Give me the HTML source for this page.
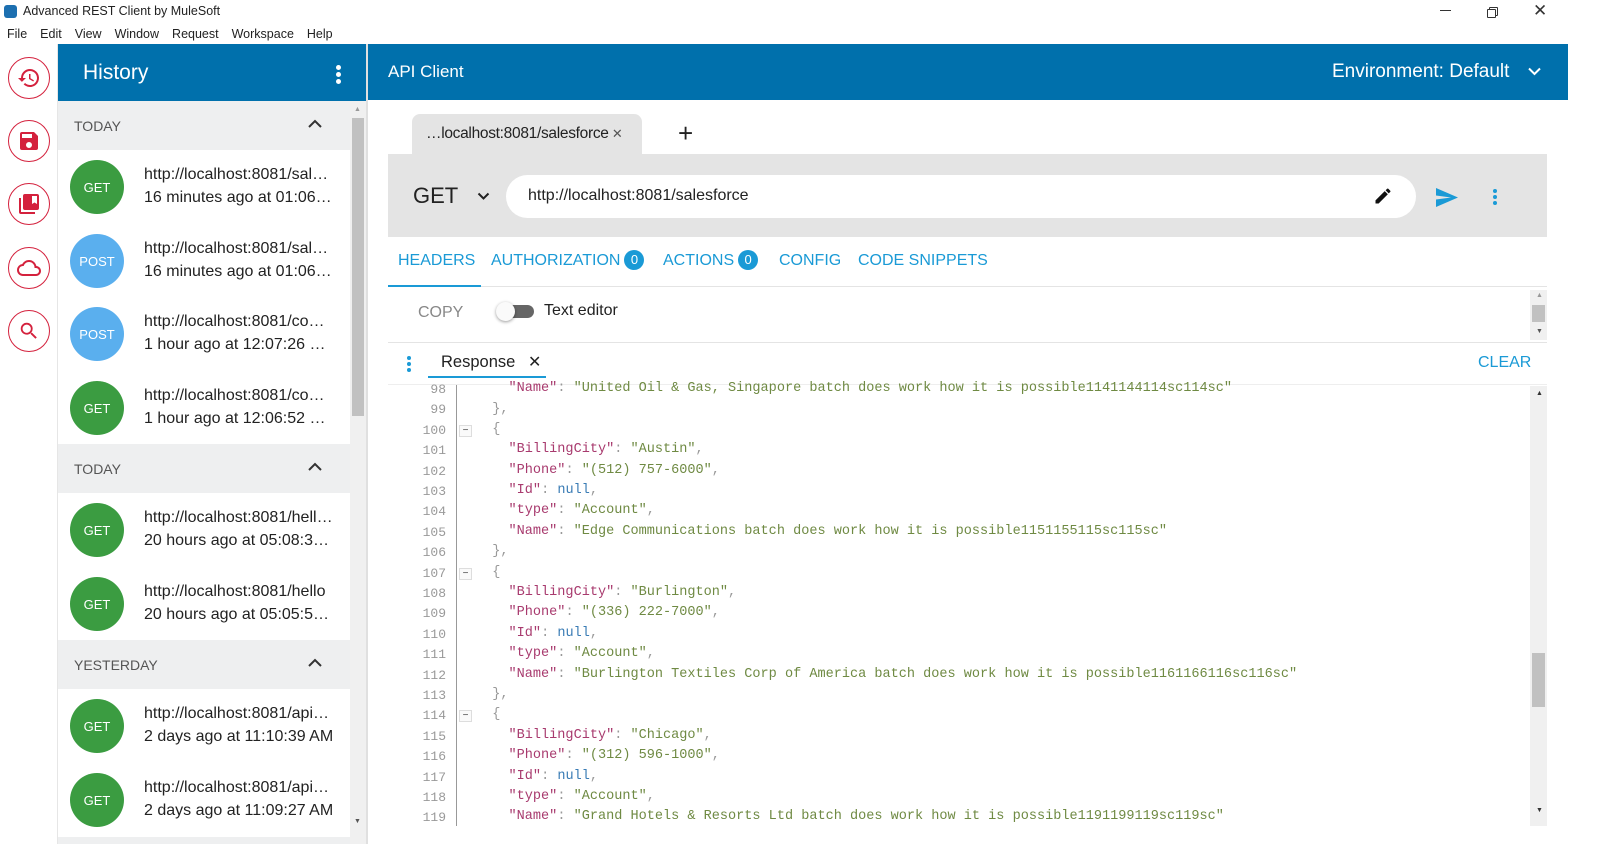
<!DOCTYPE html>
<html><head><meta charset="utf-8"><style>
*{box-sizing:border-box;margin:0;padding:0}
body{width:1600px;height:844px;position:relative;overflow:hidden;background:#fff;font-family:"Liberation Sans",Arial,sans-serif;color:#222}
.a{position:absolute}
.menu span{margin-right:13px}
.rail{left:8px;width:42px;height:42px;border:1.3px solid #d4213d;border-radius:50%;display:flex;align-items:center;justify-content:center}
.grp{left:58px;width:292px;height:49px;background:#eeeff0;color:#555;font-size:14px;padding:17px 0 0 16px}
.grp svg{position:absolute;right:28px;top:18px}
.item{left:58px;width:292px;height:74px;background:#fff}
.circ{position:absolute;left:12px;top:10px;width:54px;height:54px;border-radius:50%;color:#fff;font-size:13px;display:flex;align-items:center;justify-content:center}
.g{background:#3b9c41}.p{background:#5aafee}
.t1,.t2{position:absolute;left:86px;font-size:16px;color:#222;white-space:nowrap}
.t1{top:16px}.t2{top:39px}
.tab{font-size:16px;color:#1a9ad6;top:252px}
.badge{display:inline-block;width:20px;height:20px;border-radius:50%;background:#1a9ad6;color:#fff;font-size:13px;text-align:center;line-height:20px;margin-left:4px;vertical-align:1px}
.ln{left:400px;width:46px;text-align:right;font-family:"Liberation Mono",monospace;font-size:13px;color:#999}
.cd{left:476px;font-family:"Liberation Mono",monospace;font-size:13.55px;color:#999;white-space:pre}
.k{color:#a83a6e}.s{color:#6f8a43}.n{color:#3a7cb5}
.fold{left:459px;width:13px;height:12px;border:1px solid #ddd;background:#fafafa;font-size:10px;line-height:9px;text-align:center;color:#444}
</style></head><body>
<div class="a" style="left:4px;top:5px;width:13px;height:13px;background:#1c6fb0;border-radius:3px"></div>
<div class="a" style="left:23px;top:4px;font-size:12.5px;color:#222">Advanced REST Client by MuleSoft</div>
<div class="a" style="left:1440px;top:10px;width:11px;height:1px;background:#333"></div>
<div class="a" style="left:1489px;top:7px;width:9px;height:9px;border:1px solid #333;border-radius:1px"></div>
<div class="a" style="left:1487px;top:9px;width:9px;height:9px;border:1px solid #333;background:#fff;border-radius:1px"></div>
<div class="a" style="left:1533px;top:1px;font-size:17px;color:#333">✕</div>
<div class="a menu" style="left:7px;top:27px;font-size:12.5px;color:#222"><span>File</span><span>Edit</span><span>View</span><span>Window</span><span>Request</span><span>Workspace</span><span>Help</span></div>

<div class="a rail" style="top:57px"><svg width="24" height="24" viewBox="0 0 24 24"><path fill="#d4213d" d="M13 3a9 9 0 0 0-9 9H1l3.9 3.9L9 12H6a7 7 0 1 1 2.05 4.950l-1.42 1.42A9 9 0 1 0 13 3zm-1 5v5l4.28 2.54.72-1.21-3.5-2.08V8H12z"/></svg></div>
<div class="a rail" style="top:120px"><svg width="24" height="24" viewBox="0 0 24 24"><path fill="#d4213d" d="M17 3H5a2 2 0 0 0-2 2v14a2 2 0 0 0 2 2h14a2 2 0 0 0 2-2V7l-4-4zm-5 16a3 3 0 1 1 0-6 3 3 0 0 1 0 6zm3-10H5V5h10v4z"/></svg></div>
<div class="a rail" style="top:183px"><svg width="24" height="24" viewBox="0 0 24 24"><path fill="#d4213d" d="M4 6H2v14a2 2 0 0 0 2 2h14v-2H4V6zm16-4H8a2 2 0 0 0-2 2v12a2 2 0 0 0 2 2h12a2 2 0 0 0 2-2V4a2 2 0 0 0-2-2zm0 10-2.5-1.5L15 12V4h5v8z"/></svg></div>
<div class="a rail" style="top:247px"><svg width="24" height="24" viewBox="0 0 24 24"><path fill="#d4213d" d="M19.35 10.04A7.49 7.49 0 0 0 12 4C9.11 4 6.6 5.64 5.350 8.04A5.99 5.99 0 0 0 0 14c0 3.31 2.69 6 6 6h13c2.76 0 5-2.24 5-5 0-2.64-2.05-4.78-4.65-4.96zM19 18H6c-2.21 0-4-1.79-4-4s1.79-4 4-4h.71C7.37 7.69 9.48 6 12 6a5.5 5.5 0 0 1 5.5 5.5v.5H19a3 3 0 0 1 0 6z"/></svg></div>
<div class="a rail" style="top:310px"><svg width="22" height="22" viewBox="0 0 24 24"><path fill="#d4213d" d="M15.5 14h-.79l-.28-.27A6.47 6.47 0 0 0 16 9.5 6.5 6.5 0 1 0 9.5 16c1.61 0 3.09-.59 4.23-1.57l.27.28v.79l5 4.99L20.49 19l-4.99-5zm-6 0C7.01 14 5 11.99 5 9.5S7.01 5 9.5 5 14 7.01 14 9.5 11.99 14 9.5 14z"/></svg></div>
<div class="a" style="left:57px;top:44px;width:1px;height:800px;background:#e6e6e6"></div>

<div class="a" style="left:58px;top:44px;width:309px;height:800px;background:#eeeff0"></div>
<div class="a" style="left:58px;top:44px;width:309px;height:57px;background:#0070ac"></div>
<div class="a" style="left:83px;top:61px;font-size:21px;color:#fff">History</div>
<div class="a" style="left:336px;top:65px;width:5px;height:5px;border-radius:50%;background:#fff;box-shadow:0 7px 0 #fff,0 14px 0 #fff"></div>
<div class="a" style="left:350px;top:101px;width:16px;height:743px;background:#f0f0f0"></div>
<div class="a" style="left:352px;top:118px;width:12px;height:298px;background:#c1c1c1"></div>
<div class="a" style="left:354px;top:106px;font-size:7px;color:#999">▲</div>
<div class="a" style="left:354px;top:818px;font-size:7px;color:#555">▼</div>
<div class="a" style="left:366px;top:44px;width:2px;height:800px;background:#e0e0e0"></div>

<div class="a grp" style="top:101px">TODAY<svg width="14" height="10" viewBox="0 0 14 10"><path d="M1 8l6-6 6 6" stroke="#333" stroke-width="2" fill="none"/></svg></div>
<div class="a item" style="top:150px"><div class="circ g">GET</div><div class="t1">http://localhost:8081/sal…</div><div class="t2">16 minutes ago at 01:06…</div></div>
<div class="a item" style="top:224px"><div class="circ p">POST</div><div class="t1">http://localhost:8081/sal…</div><div class="t2">16 minutes ago at 01:06…</div></div>
<div class="a item" style="top:297px"><div class="circ p">POST</div><div class="t1">http://localhost:8081/co…</div><div class="t2">1 hour ago at 12:07:26 …</div></div>
<div class="a item" style="top:371px"><div class="circ g">GET</div><div class="t1">http://localhost:8081/co…</div><div class="t2">1 hour ago at 12:06:52 …</div></div>
<div class="a grp" style="top:444px">TODAY<svg width="14" height="10" viewBox="0 0 14 10"><path d="M1 8l6-6 6 6" stroke="#333" stroke-width="2" fill="none"/></svg></div>
<div class="a item" style="top:493px"><div class="circ g">GET</div><div class="t1">http://localhost:8081/hell…</div><div class="t2">20 hours ago at 05:08:3…</div></div>
<div class="a item" style="top:567px"><div class="circ g">GET</div><div class="t1">http://localhost:8081/hello</div><div class="t2">20 hours ago at 05:05:5…</div></div>
<div class="a grp" style="top:640px">YESTERDAY<svg width="14" height="10" viewBox="0 0 14 10"><path d="M1 8l6-6 6 6" stroke="#333" stroke-width="2" fill="none"/></svg></div>
<div class="a item" style="top:689px"><div class="circ g">GET</div><div class="t1">http://localhost:8081/api…</div><div class="t2">2 days ago at 11:10:39 AM</div></div>
<div class="a item" style="top:763px"><div class="circ g">GET</div><div class="t1">http://localhost:8081/api…</div><div class="t2">2 days ago at 11:09:27 AM</div></div>

<div class="a" style="left:368px;top:44px;width:1200px;height:56px;background:#0070ac"></div>
<div class="a" style="left:388px;top:62px;font-size:17px;color:#fff">API Client</div>
<div class="a" style="left:1332px;top:61px;font-size:19px;color:#fff">Environment: Default</div>
<svg class="a" style="left:1528px;top:67px" width="13" height="9" viewBox="0 0 13 9"><path d="M1 1.5l5.5 5.5 5.5-5.5" stroke="#fff" stroke-width="2" fill="none"/></svg>

<div class="a" style="left:412px;top:114px;width:230px;height:42px;background:#e4e4e4;border-radius:8px 8px 0 0"></div>
<div class="a" style="left:426px;top:125px;font-size:15.5px;color:#222;letter-spacing:-0.3px">…localhost:8081/salesforce<span style="font-size:13px;color:#555"> ✕</span></div>
<div class="a" style="left:678px;top:118px;font-size:26px;color:#222">+</div>
<div class="a" style="left:388px;top:154px;width:1159px;height:83px;background:#e4e4e4"></div>
<div class="a" style="left:413px;top:183px;font-size:22px;color:#222">GET</div>
<svg class="a" style="left:477px;top:192px" width="13" height="9" viewBox="0 0 13 9"><path d="M1.5 1.5l5 5 5-5" stroke="#222" stroke-width="2" fill="none"/></svg>
<div class="a" style="left:506px;top:175px;width:910px;height:43px;background:#fff;border-radius:22px"></div>
<div class="a" style="left:528px;top:187px;font-size:16px;color:#222">http://localhost:8081/salesforce</div>
<svg class="a" style="left:1373px;top:186px" width="20" height="20" viewBox="0 0 24 24"><path fill="#111" d="M3 17.25V21h3.75L17.81 9.940l-3.75-3.75L3 17.25zM20.71 7.04a1 1 0 0 0 0-1.41l-2.34-2.34a1 1 0 0 0-1.41 0l-1.83 1.830 3.75 3.75 1.83-1.83z"/></svg>
<svg class="a" style="left:1436px;top:188px" width="22" height="19" viewBox="0 0 22 19"><path fill="#1a9ad6" d="M0 0l22 9.5L0 19l0-7.5 15-2-15-2z"/></svg>
<div class="a" style="left:1493px;top:189px;width:4px;height:4px;border-radius:50%;background:#1a9ad6;box-shadow:0 6px 0 #1a9ad6,0 12px 0 #1a9ad6"></div>

<div class="a tab" style="left:398px">HEADERS</div>
<div class="a tab" style="left:491px;top:250px">AUTHORIZATION<span class="badge">0</span></div>
<div class="a tab" style="left:663px;top:250px">ACTIONS<span class="badge">0</span></div>
<div class="a tab" style="left:779px">CONFIG</div>
<div class="a tab" style="left:858px">CODE SNIPPETS</div>
<div class="a" style="left:388px;top:286px;width:1159px;height:1px;background:#e4e4e4"></div>
<div class="a" style="left:388px;top:285px;width:93px;height:2px;background:#1a9ad6"></div>

<div class="a" style="left:418px;top:304px;font-size:16px;color:#888">COPY</div>
<div class="a" style="left:500px;top:305px;width:34px;height:13px;border-radius:7px;background:#666"></div>
<div class="a" style="left:496px;top:302px;width:19px;height:19px;border-radius:50%;background:#fafafa;box-shadow:0 1px 3px rgba(0,0,0,.4)"></div>
<div class="a" style="left:544px;top:302px;font-size:16px;color:#222">Text editor</div>
<div class="a" style="left:1530px;top:290px;width:17px;height:50px;background:#f0f0f0"></div>
<div class="a" style="left:1532px;top:305px;width:13px;height:17px;background:#c1c1c1"></div>
<div class="a" style="left:1536px;top:292px;font-size:7px;color:#999">▲</div>
<div class="a" style="left:1536px;top:328px;font-size:7px;color:#555">▼</div>
<div class="a" style="left:388px;top:342px;width:1159px;height:1px;background:#e4e4e4"></div>

<div class="a" style="left:407px;top:356px;width:4px;height:4px;border-radius:50%;background:#1a9ad6;box-shadow:0 6px 0 #1a9ad6,0 12px 0 #1a9ad6"></div>
<div class="a" style="left:441px;top:353px;font-size:16.5px;color:#222">Response</div>
<div class="a" style="left:528px;top:352px;font-size:16px;color:#222">✕</div>
<div class="a" style="left:428px;top:376px;width:118px;height:2px;background:#1a9ad6"></div>
<div class="a" style="left:1478px;top:354px;font-size:16px;color:#1a9ad6">CLEAR</div>
<div class="a" style="left:388px;top:384px;width:1159px;height:1px;background:#eee"></div>

<div class="a" style="left:456px;top:385px;width:1px;height:459px;background:#999"></div>
<div class="a" style="left:1530px;top:386px;width:17px;height:440px;background:#f0f0f0"></div>
<div class="a" style="left:1532px;top:653px;width:13px;height:54px;background:#c1c1c1"></div>
<div class="a" style="left:1536px;top:390px;font-size:7px;color:#333">▲</div>
<div class="a" style="left:1536px;top:807px;font-size:7px;color:#333">▼</div>

<div class="a ln" style="top:382px">98</div><div class="a cd" style="top:381px">    <span class="k">"Name"</span>: <span class="s">"United Oil &amp; Gas, Singapore batch does work how it is possible1141144114sc114sc"</span></div>
<div class="a ln" style="top:402px">99</div><div class="a cd" style="top:402px">  },</div>
<div class="a ln" style="top:423px">100</div><div class="a fold" style="top:425px">−</div><div class="a cd" style="top:422px">  {</div>
<div class="a ln" style="top:443px">101</div><div class="a cd" style="top:442px">    <span class="k">"BillingCity"</span>: <span class="s">"Austin"</span>,</div>
<div class="a ln" style="top:464px">102</div><div class="a cd" style="top:463px">    <span class="k">"Phone"</span>: <span class="s">"(512) 757-6000"</span>,</div>
<div class="a ln" style="top:484px">103</div><div class="a cd" style="top:483px">    <span class="k">"Id"</span>: <span class="n">null</span>,</div>
<div class="a ln" style="top:504px">104</div><div class="a cd" style="top:503px">    <span class="k">"type"</span>: <span class="s">"Account"</span>,</div>
<div class="a ln" style="top:525px">105</div><div class="a cd" style="top:524px">    <span class="k">"Name"</span>: <span class="s">"Edge Communications batch does work how it is possible1151155115sc115sc"</span></div>
<div class="a ln" style="top:545px">106</div><div class="a cd" style="top:544px">  },</div>
<div class="a ln" style="top:566px">107</div><div class="a fold" style="top:568px">−</div><div class="a cd" style="top:565px">  {</div>
<div class="a ln" style="top:586px">108</div><div class="a cd" style="top:585px">    <span class="k">"BillingCity"</span>: <span class="s">"Burlington"</span>,</div>
<div class="a ln" style="top:606px">109</div><div class="a cd" style="top:605px">    <span class="k">"Phone"</span>: <span class="s">"(336) 222-7000"</span>,</div>
<div class="a ln" style="top:627px">110</div><div class="a cd" style="top:626px">    <span class="k">"Id"</span>: <span class="n">null</span>,</div>
<div class="a ln" style="top:647px">111</div><div class="a cd" style="top:646px">    <span class="k">"type"</span>: <span class="s">"Account"</span>,</div>
<div class="a ln" style="top:668px">112</div><div class="a cd" style="top:667px">    <span class="k">"Name"</span>: <span class="s">"Burlington Textiles Corp of America batch does work how it is possible1161166116sc116sc"</span></div>
<div class="a ln" style="top:688px">113</div><div class="a cd" style="top:687px">  },</div>
<div class="a ln" style="top:708px">114</div><div class="a fold" style="top:710px">−</div><div class="a cd" style="top:707px">  {</div>
<div class="a ln" style="top:729px">115</div><div class="a cd" style="top:728px">    <span class="k">"BillingCity"</span>: <span class="s">"Chicago"</span>,</div>
<div class="a ln" style="top:749px">116</div><div class="a cd" style="top:748px">    <span class="k">"Phone"</span>: <span class="s">"(312) 596-1000"</span>,</div>
<div class="a ln" style="top:770px">117</div><div class="a cd" style="top:769px">    <span class="k">"Id"</span>: <span class="n">null</span>,</div>
<div class="a ln" style="top:790px">118</div><div class="a cd" style="top:789px">    <span class="k">"type"</span>: <span class="s">"Account"</span>,</div>
<div class="a ln" style="top:810px">119</div><div class="a cd" style="top:809px">    <span class="k">"Name"</span>: <span class="s">"Grand Hotels &amp; Resorts Ltd batch does work how it is possible1191199119sc119sc"</span></div>
<div class="a" style="left:388px;top:826px;width:1160px;height:18px;background:#fff"></div>
</body></html>
